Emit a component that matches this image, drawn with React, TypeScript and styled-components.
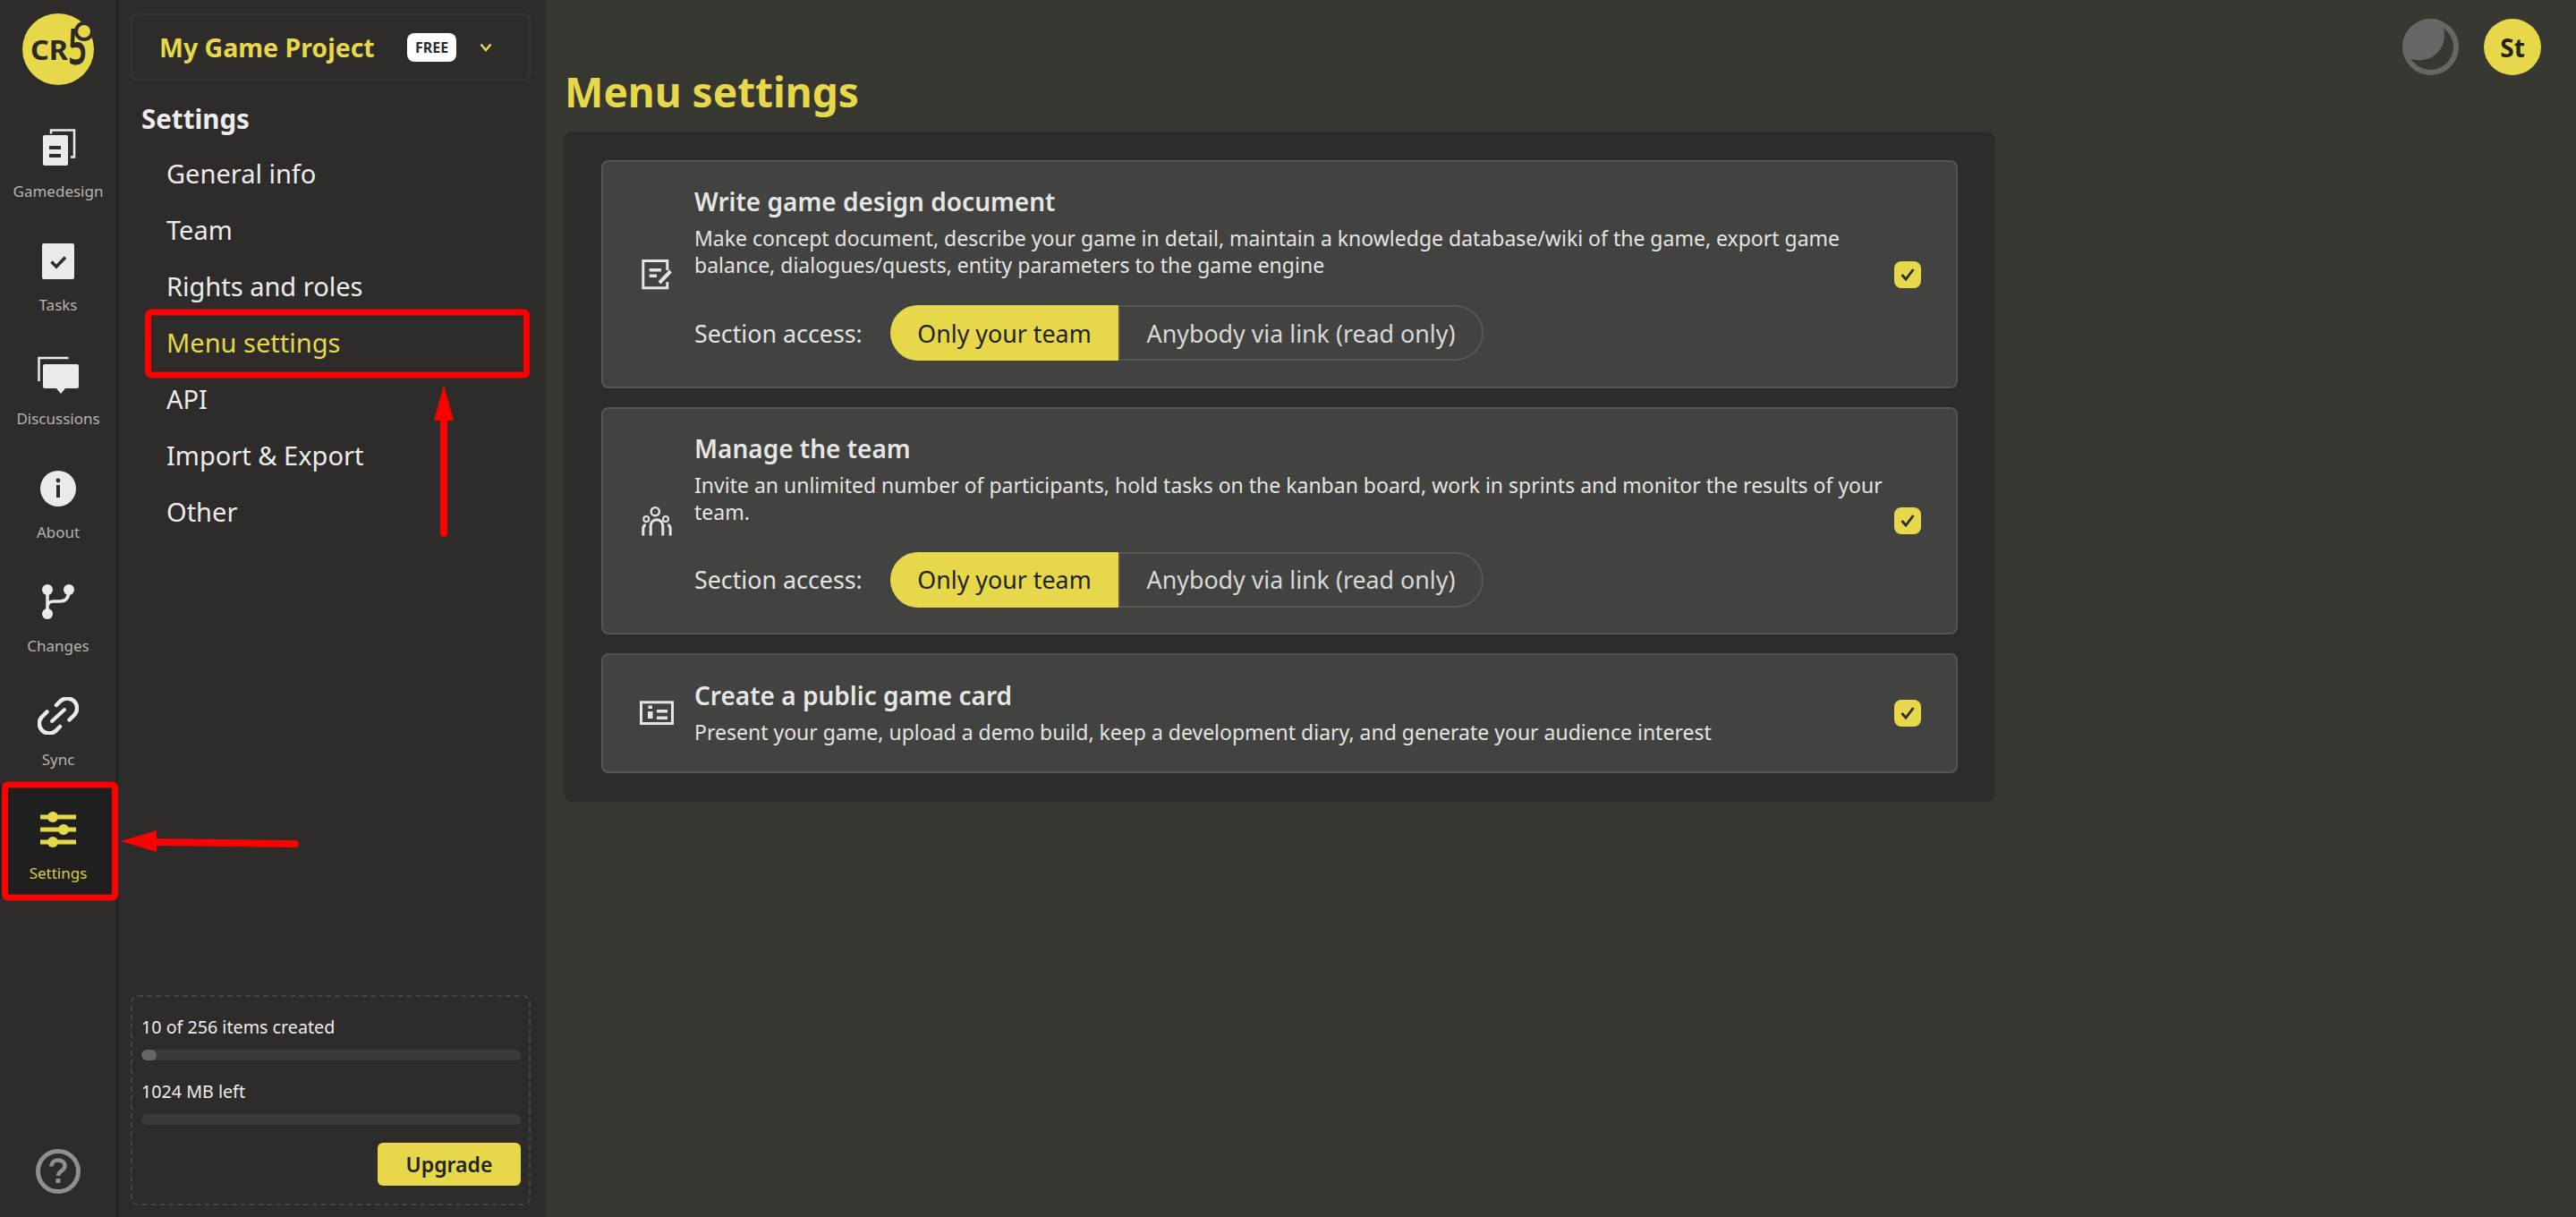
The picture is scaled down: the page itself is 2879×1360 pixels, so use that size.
import React from 'react'
import styled, { createGlobalStyle } from 'styled-components'

const YELLOW = '#e6d84a'
const DARK = '#2d2c2a'
const FONT = `"Noto Sans", Lato, sans-serif`

const GlobalStyle = createGlobalStyle`
  html, body { margin: 0; padding: 0; height: 100%; background: #383833; }
  body { font-family: ${FONT}; color: #eaeaea; overflow: hidden; }
  #root { height: 100%; }
  * { box-sizing: border-box; }
`

const Page = styled.div`
  position: relative;
  display: flex;
  width: 100%;
  height: 100vh;
`

const Rail = styled.aside`
  flex: none;
  width: 132px;
  display: flex;
  flex-direction: column;
  align-items: center;
  padding: 15px 0 26px 0;
  background: ${DARK};
  border-right: 2px solid #242322;
`
const RailNav = styled.nav`
  width: 130px;
  margin-top: 20px;
  display: flex;
  flex-direction: column;
`
const RailItem = styled.div<{ $active?: boolean }>`
  height: 127px;
  padding-top: 29px;
  display: flex;
  flex-direction: column;
  align-items: center;
  gap: 15px;
  background: ${(p) => (p.$active ? '#201f1f' : 'transparent')};
  color: ${(p) => (p.$active ? YELLOW : '#eaeaea')};
`
const RailLabel = styled.div<{ $active?: boolean }>`
  font-size: 17px;
  line-height: 26px;
  color: ${(p) => (p.$active ? '#d9cc46' : '#b4b4b2')};
`
const HelpButton = styled.div`
  margin-top: auto;
  width: 50px;
  height: 50px;
  color: #8f8f8d;
`

const Sidebar = styled.aside`
  flex: none;
  width: 478px;
  display: flex;
  flex-direction: column;
  padding: 15px 17px 13px 14px;
  background: ${DARK};
`
const ProjectBox = styled.div`
  height: 75px;
  display: flex;
  align-items: center;
  padding-left: 30px;
  border: 2px solid #363533;
  border-radius: 8px;
`
const ProjectName = styled.div`
  width: 242px;
  white-space: nowrap;
  font-size: 28.5px;
  font-weight: 700;
  color: ${YELLOW};
`
const PlanBadge = styled.div`
  margin-left: 35px;
  width: 55px;
  height: 32px;
  display: flex;
  align-items: center;
  justify-content: center;
  background: #fff;
  border-radius: 8px;
  color: #2b2b2b;
  font-size: 16px;
  font-weight: 700;
`
const ProjectCaret = styled.svg`
  margin-left: 26px;
  width: 14px;
  height: 10px;
  color: ${YELLOW};
`
const SideTitle = styled.div`
  margin: 24px 0 0 12px;
  height: 38px;
  line-height: 38px;
  font-size: 29.5px;
  font-weight: 700;
  color: #ededed;
`
const SideMenu = styled.div`
  margin-top: 10px;
  display: flex;
  flex-direction: column;
`
const SideLink = styled.div<{ $active?: boolean }>`
  height: 63px;
  line-height: 63px;
  padding-left: 40px;
  font-size: 29px;
  color: ${(p) => (p.$active ? YELLOW : '#ececec')};
`
const Quota = styled.div`
  margin-top: auto;
  height: 235px;
  padding: 20px 9px 0 10px;
  border: 2px dashed #444341;
  border-radius: 8px;
  display: flex;
  flex-direction: column;
`
const QuotaText = styled.div`
  height: 28px;
  line-height: 28px;
  font-size: 19.7px;
  color: #ececec;
`
const QuotaBar = styled.div`
  margin: 11px 0 21px 0;
  height: 12px;
  border-radius: 6px;
  background: #3b3a39;
  overflow: hidden;
`
const QuotaFill = styled.div`
  height: 100%;
  border-radius: 6px;
  background: #666664;
`
const UpgradeButton = styled.div`
  align-self: flex-end;
  margin-top: -1px;
  width: 160px;
  height: 48px;
  display: flex;
  align-items: center;
  justify-content: center;
  background: ${YELLOW};
  border-radius: 6px;
  color: #232322;
  font-size: 23px;
  font-weight: 600;
`

const Main = styled.main`
  flex: 1;
  min-width: 0;
  padding: 0 39px 0 20px;
  display: flex;
  flex-direction: column;
  align-items: flex-start;
  background: #383833;
`
const Header = styled.header`
  width: 100%;
  display: flex;
  justify-content: space-between;
  align-items: flex-start;
`
const PageTitle = styled.h1`
  margin: 74px 0 0 1px;
  height: 56px;
  line-height: 56px;
  font-size: 46px;
  font-weight: 700;
  color: ${YELLOW};
`
const UserTools = styled.div`
  margin-top: 21px;
  display: flex;
  align-items: center;
  gap: 28px;
`
const ThemeIcon = styled.svg`
  width: 63px;
  height: 63px;
`
const Avatar = styled.div`
  width: 64px;
  height: 63px;
  border-radius: 50%;
  display: flex;
  align-items: center;
  justify-content: center;
  background: ${YELLOW};
  color: #232322;
  font-size: 28px;
  font-weight: 700;
`
const Panel = styled.section`
  margin-top: 17px;
  width: 1600px;
  padding: 32px 42px;
  display: flex;
  flex-direction: column;
  gap: 21px;
  background: ${DARK};
  border-radius: 10px;
`
const Card = styled.article<{ $height: number }>`
  height: ${(p) => p.$height}px;
  display: flex;
  align-items: center;
  padding: 0 39px 0 41px;
  background: #424240;
  border: 2px solid #545452;
  border-radius: 8px;
`
const CardIcon = styled.svg`
  flex: none;
  width: 38px;
  height: 36px;
  color: #e4e4e2;
`
const CardBody = styled.div`
  flex: 1;
  min-width: 0;
  margin-left: 23px;
  padding-bottom: 3px;
`
const CardTitle = styled.div`
  height: 40px;
  margin-bottom: 4px;
  line-height: 36px;
  font-size: 28px;
  font-weight: 600;
  color: #e6e6e4;
`
const CardText = styled.div`
  width: 1335px;
  line-height: 30px;
  font-size: 23px;
  color: #e4e4e2;
`
const AccessRow = styled.div`
  margin-top: 30px;
  display: flex;
  align-items: center;
`
const AccessLabel = styled.div`
  width: 219px;
  white-space: nowrap;
  font-size: 26.8px;
  color: #e4e4e2;
`
const Segment = styled.div<{ $on?: boolean }>`
  height: 62px;
  display: flex;
  align-items: center;
  justify-content: center;
  white-space: nowrap;
  font-size: 26.8px;
  ${(p) =>
    p.$on
      ? `width: 255px; background: ${YELLOW}; color: #232322; border-radius: 31px 0 0 31px;`
      : `width: 408px; color: #d8d8d6; border: 2px solid #555553; border-radius: 0 31px 31px 0;`}
`
const Check = styled.div`
  flex: none;
  width: 30px;
  height: 30px;
  display: flex;
  align-items: center;
  justify-content: center;
  background: ${YELLOW};
  border-radius: 8px;
  color: #2d2c2a;
`

const Annotations = styled.svg`
  position: absolute;
  left: 0;
  top: 0;
  width: 100%;
  height: 100%;
  pointer-events: none;
`

function Logo() {
  return (
    <svg width="80" height="80" viewBox="0 0 80 80" style={{ flex: 'none', overflow: 'visible' }}>
      <circle cx="40" cy="40" r="40" fill={YELLOW} />
      <text x="9" y="52" fontFamily={FONT} fontWeight="700" fontSize="31" fill="#2b2a28" textLength="42" lengthAdjust="spacingAndGlyphs">
        CR
      </text>
      <text x="51" y="57" fontFamily={FONT} fontWeight="600" fontSize="56" fill="#2b2a28" textLength="21" lengthAdjust="spacingAndGlyphs">
        5
      </text>
      <circle cx="69" cy="20" r="11" fill={DARK} />
      <circle cx="69" cy="20" r="7" fill={YELLOW} />
    </svg>
  )
}

const railIcons: Record<string, React.ReactNode> = {
  Gamedesign: (
    <>
      <path d="M15 5.500V1.500H41V31.500H37" fill="none" stroke="currentColor" strokeWidth="2.500" />
      <path d="M6 9a2 2 0 0 1 2-2h24a2 2 0 0 1 2 2v30a2 2 0 0 1-2 2H8a2 2 0 0 1-2-2z" fill="currentColor" />
      <path d="M13 19h13v4H13zM13 28h13v4H13z" fill={DARK} />
    </>
  ),
  Tasks: (
    <>
      <rect x="5" y="1" width="36" height="40" rx="2" fill="currentColor" />
      <path d="M15.500 21.500l5.500 5.500 10-10.500" fill="none" stroke={DARK} strokeWidth="3.500" />
    </>
  ),
  Discussions: (
    <>
      <path d="M1.500 28V2h33" fill="none" stroke="currentColor" strokeWidth="2.500" />
      <path d="M8 9h36a2 2 0 0 1 2 2v23a2 2 0 0 1-2 2H31l-5 6-5-6H8a2 2 0 0 1-2-2V11a2 2 0 0 1 2-2z" fill="currentColor" />
    </>
  ),
  About: (
    <>
      <circle cx="23" cy="21" r="20" fill="currentColor" />
      <circle cx="23" cy="12" r="2.400" fill={DARK} />
      <rect x="21" y="17" width="4" height="14" fill={DARK} />
    </>
  ),
  Changes: (
    <>
      <path d="M11 8v26M35 8c0 9-4 12-10 12h-7c-4 0-7 2-7 6" fill="none" stroke="currentColor" strokeWidth="3.500" />
      <circle cx="11" cy="7" r="6" fill="currentColor" />
      <circle cx="35" cy="7" r="6" fill="currentColor" />
      <circle cx="11" cy="34" r="6" fill="currentColor" />
    </>
  ),
  Sync: (
    <>
      <path d="M21 9l5-5a11 11 0 0 1 15.500 15.500l-6 6M25 33l-5 5A11 11 0 0 1 4.500 22.500l6-6" fill="none" stroke="currentColor" strokeWidth="4.500" strokeLinecap="round" />
      <path d="M16 27l14-13" fill="none" stroke="currentColor" strokeWidth="4" strokeLinecap="round" />
    </>
  ),
  Settings: (
    <>
      <path d="M3 7h40M3 21h40M3 35h40" stroke="currentColor" strokeWidth="5" />
      <circle cx="17" cy="7" r="6" fill="currentColor" />
      <circle cx="29" cy="21" r="6" fill="currentColor" />
      <circle cx="17" cy="35" r="6" fill="currentColor" />
    </>
  ),
}

const railItems = ['Gamedesign', 'Tasks', 'Discussions', 'About', 'Changes', 'Sync', 'Settings']
const sideLinks = ['General info', 'Team', 'Rights and roles', 'Menu settings', 'API', 'Import & Export', 'Other']

function SectionAccess() {
  return (
    <AccessRow>
      <AccessLabel>Section access:</AccessLabel>
      <Segment $on>Only your team</Segment>
      <Segment>Anybody via link (read only)</Segment>
    </AccessRow>
  )
}

function Tick() {
  return (
    <Check>
      <svg width="20" height="18" viewBox="0 0 20 18">
        <path d="M3.500 9l4.500 5L16.500 3" fill="none" stroke="currentColor" strokeWidth="2.800" />
      </svg>
    </Check>
  )
}

export default function App() {
  return (
    <Page>
      <GlobalStyle />
      <Rail>
        <Logo />
        <RailNav>
          {railItems.map((name) => (
            <RailItem key={name} $active={name === 'Settings'}>
              <svg width="46" height="42" viewBox="0 0 46 42">
                {railIcons[name]}
              </svg>
              <RailLabel $active={name === 'Settings'}>{name}</RailLabel>
            </RailItem>
          ))}
        </RailNav>
        <HelpButton>
          <svg width="50" height="50" viewBox="0 0 50 50">
            <circle cx="25" cy="25" r="22.500" fill="none" stroke="currentColor" strokeWidth="5" />
            <path d="M17.500 19.500c0-4.500 3.500-7 7.500-7s7.500 2.500 7.500 6.500c0 5.500-7.500 5.500-7.500 11" fill="none" stroke="currentColor" strokeWidth="4.500" />
            <rect x="22.500" y="33" width="5" height="5" fill="currentColor" />
          </svg>
        </HelpButton>
      </Rail>

      <Sidebar>
        <ProjectBox>
          <ProjectName>My Game Project</ProjectName>
          <PlanBadge>FREE</PlanBadge>
          <ProjectCaret viewBox="0 0 14 10">
            <path d="M1.500 1.500L7 8l5.500-6.500" fill="none" stroke="currentColor" strokeWidth="2.500" />
          </ProjectCaret>
        </ProjectBox>
        <SideTitle>Settings</SideTitle>
        <SideMenu>
          {sideLinks.map((name) => (
            <SideLink key={name} $active={name === 'Menu settings'}>
              {name}
            </SideLink>
          ))}
        </SideMenu>
        <Quota>
          <QuotaText>10 of 256 items created</QuotaText>
          <QuotaBar>
            <QuotaFill style={{ width: `${(10 / 256) * 100}%` }} />
          </QuotaBar>
          <QuotaText>1024 MB left</QuotaText>
          <QuotaBar />
          <UpgradeButton>Upgrade</UpgradeButton>
        </Quota>
      </Sidebar>

      <Main>
        <Header>
          <PageTitle>Menu settings</PageTitle>
          <UserTools>
            <ThemeIcon viewBox="0 0 63 63">
              <defs>
                <clipPath id="moonClip">
                  <circle cx="31.500" cy="31.500" r="31.500" />
                </clipPath>
              </defs>
              <circle cx="31.500" cy="31.500" r="31.500" fill="#666664" />
              <circle cx="31.500" cy="31.500" r="25.500" fill="#383833" />
              <circle cx="19" cy="18.500" r="28" fill="#666664" clipPath="url(#moonClip)" />
            </ThemeIcon>
            <Avatar>St</Avatar>
          </UserTools>
        </Header>
        <Panel>
          <Card $height={255}>
            <CardIcon viewBox="0 0 38 36">
              <path d="M30.800 13V2.500H3.800V32.800H30.800V26" fill="none" stroke="currentColor" strokeWidth="3" />
              <path d="M10.700 11H24v3.400H10.700zM10.700 17.600H19v3.400h-8.300z" fill="currentColor" />
              <path d="M22 27L34.500 14" fill="none" stroke="currentColor" strokeWidth="4" />
            </CardIcon>
            <CardBody>
              <CardTitle>Write game design document</CardTitle>
              <CardText>
                Make concept document, describe your game in detail, maintain a knowledge database/wiki of the game, export game balance, dialogues/quests, entity parameters to the game engine
              </CardText>
              <SectionAccess />
            </CardBody>
            <Tick />
          </Card>
          <Card $height={254}>
            <CardIcon viewBox="0 0 38 36">
              <circle cx="17.300" cy="7.700" r="4.600" fill="none" stroke="currentColor" strokeWidth="2.400" />
              <circle cx="7.300" cy="16" r="3" fill="none" stroke="currentColor" strokeWidth="2" />
              <circle cx="29" cy="16" r="3" fill="none" stroke="currentColor" strokeWidth="2" />
              <path d="M12.200 34.500V23.500a6.800 6.800 0 0 1 13.600 0V34.500" fill="none" stroke="currentColor" strokeWidth="3" />
              <path d="M3.800 34.500V27c0-2 .8-4 3-4.500M34.200 34.500V27c0-2-.8-4-3-4.500" fill="none" stroke="currentColor" strokeWidth="3" />
            </CardIcon>
            <CardBody>
              <CardTitle>Manage the team</CardTitle>
              <CardText>
                Invite an unlimited number of participants, hold tasks on the kanban board, work in sprints and monitor the results of your team.
              </CardText>
              <SectionAccess />
            </CardBody>
            <Tick />
          </Card>
          <Card $height={134}>
            <CardIcon viewBox="0 0 38 36">
              <rect x="1.500" y="5.800" width="35" height="23.700" fill="none" stroke="currentColor" strokeWidth="3" />
              <path d="M9.500 9.500h4.500V13H9.500zM9 16h5.500v8H9zM19 14h12v3.500H19zM19 21.500h12V25H19z" fill="currentColor" />
            </CardIcon>
            <CardBody>
              <CardTitle>Create a public game card</CardTitle>
              <CardText>
                Present your game, upload a demo build, keep a development diary, and generate your audience interest
              </CardText>
            </CardBody>
            <Tick />
          </Card>
        </Panel>
      </Main>

      <Annotations viewBox="0 0 2879 1360">
        <rect x="5.500" y="877" width="123" height="126" rx="3" fill="none" stroke="#fe0000" strokeWidth="7" />
        <rect x="165.500" y="349" width="423" height="70" rx="3" fill="none" stroke="#fe0000" strokeWidth="7" />
        <path d="M496 469V596" stroke="#fe0000" strokeWidth="8" strokeLinecap="round" />
        <path d="M496 430L507 470H485Z" fill="#fe0000" />
        <path d="M175 941L330 943" stroke="#fe0000" strokeWidth="8" strokeLinecap="round" />
        <path d="M135 940L175 928V952Z" fill="#fe0000" />
      </Annotations>
    </Page>
  )
}
